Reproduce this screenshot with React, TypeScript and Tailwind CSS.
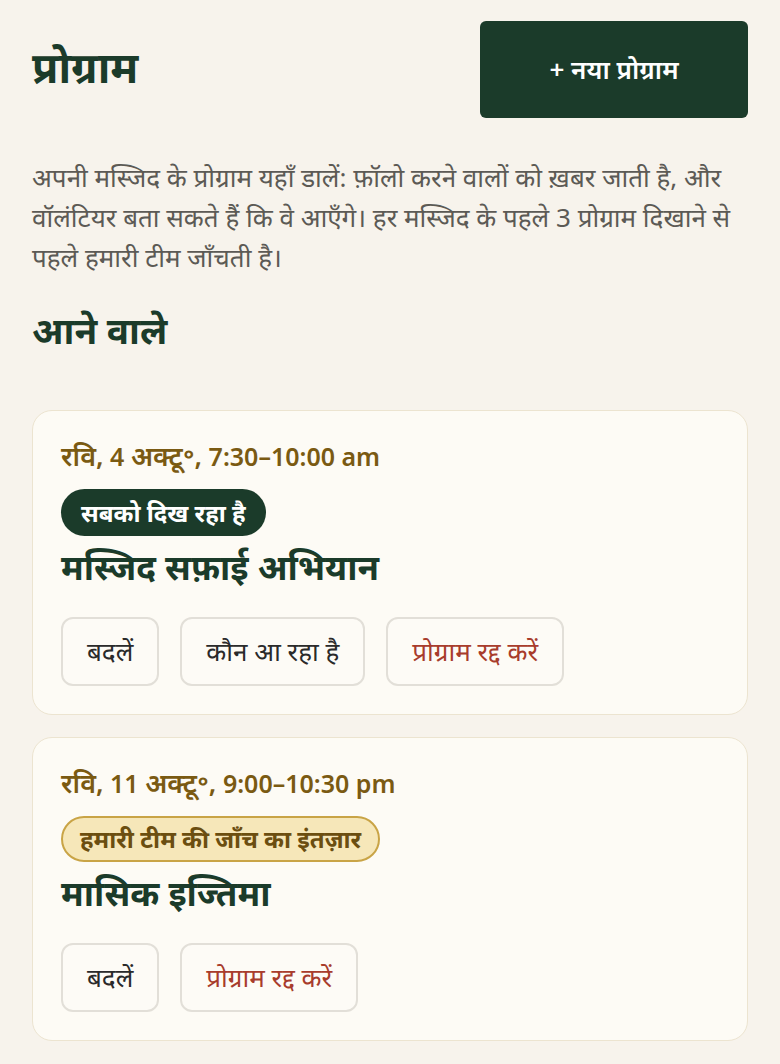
const FONT = "font-['Noto_Sans','Open_Sans',sans-serif]";

type Program = {
  day: string;
  date: string;
  month: string;
  time: string;
  status: "live" | "pending";
  title: string;
  actions: { label: string; danger?: boolean }[];
};

const programs: Program[] = [
  {
    day: "रवि,",
    date: "4",
    month: "अक्टू॰,",
    time: "7:30–10:00 am",
    status: "live",
    title: "मस्जिद सफ़ाई अभियान",
    actions: [
      { label: "बदलें" },
      { label: "कौन आ रहा है" },
      { label: "प्रोग्राम रद्द करें", danger: true },
    ],
  },
  {
    day: "रवि,",
    date: "11",
    month: "अक्टू॰,",
    time: "9:00–10:30 pm",
    status: "pending",
    title: "मासिक इज्तिमा",
    actions: [{ label: "बदलें" }, { label: "प्रोग्राम रद्द करें", danger: true }],
  },
];

const ProgramCard = ({ p }: { p: Program }) => (
  <div className="rounded-[20px] border border-[#ece4d0] bg-[#fdfbf5] px-[28px] pt-[28px] pb-[28px]">
    <p className="whitespace-nowrap text-[25px] font-semibold leading-[34px] text-[#7a5a12]">
      <span className="text-[27px]">{p.day}</span> {p.date} <span className="text-[27px]">{p.month}</span> {p.time}
    </p>
    <div className="mt-[16px] flex">
      {p.status === "live" ? (
        <span className="inline-flex h-[47px] items-center rounded-full bg-[#1b3b2a] px-[20px] text-[24px] font-bold text-white">
          सबको दिख रहा है
        </span>
      ) : (
        <span className="inline-flex h-[46px] items-center rounded-full border-2 border-[#c9a446] bg-[#f6e7b9] px-[17px] text-[24px] font-bold text-[#6b4e10]">
          हमारी टीम की जाँच का इंतज़ार
        </span>
      )}
    </div>
    <h3 className="mt-[9px] text-[35px] font-bold leading-[44px] text-[#1b3b2a]">{p.title}</h3>
    <div className="mt-[28px] flex gap-[21px]">
      {p.actions.map((a) => (
        <button
          key={a.label}
          className={`h-[69px] rounded-[12px] border-2 border-[#e2dfd8] bg-[#fdfbf6] px-[24px] text-[26px] ${
            a.danger ? "text-[#a83c2c]" : "text-[#2a2a2a]"
          }`}
        >
          {a.label}
        </button>
      ))}
    </div>
  </div>
);

export default function App() {
  return (
    <div className={`min-h-screen bg-[#f7f3ec] ${FONT}`}>
      <div className="px-[32px] pt-[21px] pb-[22px]">
        {/* Header */}
        <div className="flex items-start justify-between">
          <h1 className="mt-[18px] text-[43px] font-bold leading-[56px] text-[#1b3b2a]">प्रोग्राम</h1>
          <button className="flex h-[97px] w-[268px] items-center justify-center rounded-[6px] bg-[#1b3b2a] text-[26px] font-semibold text-white">
            + नया प्रोग्राम
          </button>
        </div>

        <p className="mt-[39px] text-[26px] leading-[40px] text-[#5c5a55]">
          अपनी मस्जिद के प्रोग्राम यहाँ डालें: फ़ॉलो करने वालों को ख़बर जाती है, और वॉलंटियर बता सकते हैं कि वे आएँगे। हर मस्जिद के पहले 3 प्रोग्राम दिखाने से पहले हमारी टीम जाँचती है।
        </p>

        <h2 className="mt-[28px] text-[37px] font-bold leading-[50px] text-[#1b3b2a]">आने वाले</h2>

        {/* Upcoming programs */}
        <div className="mt-[55px] flex flex-col gap-[22px]">
          {programs.map((p) => (
            <ProgramCard key={p.title} p={p} />
          ))}
        </div>
      </div>
    </div>
  );
}
